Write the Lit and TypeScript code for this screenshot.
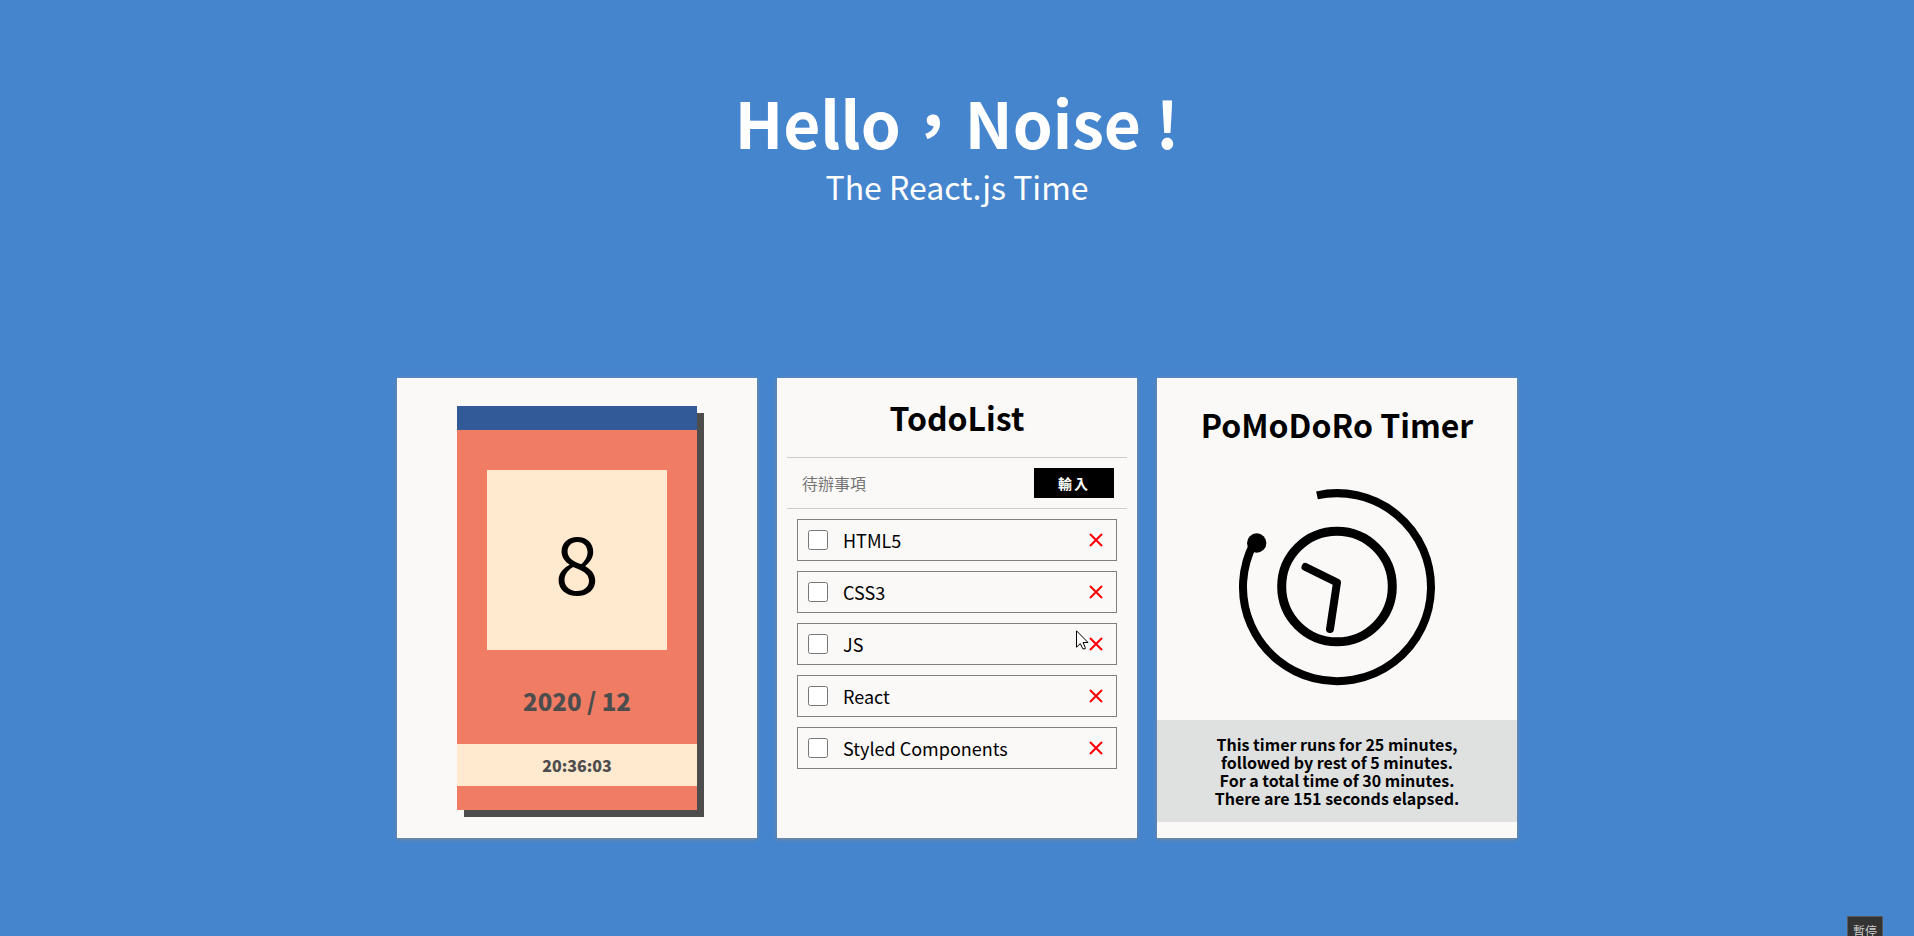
import { LitElement, html, css } from "lit";
import { customElement, property, state } from "lit/decorators.js";

@customElement("calendar-card")
class CalendarCard extends LitElement {
  @property({ type: Number }) year = 2020;
  @property({ type: Number }) month = 12;
  @property({ type: Number }) day = 8;
  @property() time = "20:36:03";

  static styles = css`
    :host {
      display: flex;
      flex-direction: column;
      align-items: center;
      justify-content: center;
    }
    .calendar {
      width: 240px;
      display: flex;
      flex-direction: column;
      align-items: center;
      border-top: 24px solid #325a98;
      padding: 40px 0 24px;
      box-sizing: border-box;
      background: #f07c64;
      box-shadow: 7px 7px 0 #4d4d4d;
      color: #4d4d4d;
      font-weight: 900;
    }
    .day {
      width: 180px;
      height: 180px;
      display: flex;
      align-items: center;
      justify-content: center;
      background: #ffeacf;
      color: #000;
      font-size: 80px;
      font-weight: 350;
    }
    .month {
      margin: 32px 0 24px;
      font-size: 24px;
      line-height: 38px;
    }
    .time {
      align-self: stretch;
      background: #ffeacf;
      text-align: center;
      font-size: 16px;
      line-height: 42px;
    }
  `;

  render() {
    return html`
      <div class="calendar">
        <div class="day">${this.day}</div>
        <div class="month">${this.year} / ${this.month}</div>
        <time class="time">${this.time}</time>
      </div>
    `;
  }
}

@customElement("todo-card")
class TodoCard extends LitElement {
  @state() private items = ["HTML5", "CSS3", "JS", "React", "Styled Components"];

  static styles = css`
    :host {
      display: block;
    }
    .title {
      margin: 0;
      padding: 16px 0;
      text-align: center;
      font-size: 32px;
      line-height: 47px;
      font-weight: 700;
    }
    .entry {
      display: flex;
      align-items: center;
      justify-content: space-between;
      margin: 0 10px;
      padding: 10px 13px 10px 15px;
      border: solid #ccc;
      border-width: 1px 0;
    }
    .field {
      flex: 1;
      min-width: 0;
      padding: 0;
      border: 0;
      outline: 0;
      background: none;
      font: inherit;
      font-size: 16px;
      line-height: 24px;
    }
    .field::placeholder {
      color: #757575;
    }
    .add {
      width: 80px;
      height: 30px;
      padding: 0;
      border: 0;
      background: #000;
      color: #fff;
      font: inherit;
      font-size: 14px;
      font-weight: 700;
      letter-spacing: 2px;
    }
    .list {
      display: flex;
      flex-direction: column;
      gap: 10px;
      margin: 10px 20px;
      padding: 0;
      list-style: none;
    }
    .item {
      display: flex;
      align-items: center;
      height: 40px;
      padding: 0 10px;
      border: 1px solid #808080;
    }
    .check {
      width: 20px;
      height: 20px;
      margin: 0 15px 0 0;
    }
    .label {
      flex: 1;
      font-size: 18px;
      line-height: 30px;
    }
    .remove {
      width: 20px;
      height: 20px;
      display: flex;
      align-items: center;
      justify-content: center;
      padding: 0;
      border: 0;
      background: none;
    }
  `;

  render() {
    return html`
      <h2 class="title">TodoList</h2>
      <form class="entry" @submit=${(e: Event) => e.preventDefault()}>
        <input class="field" type="text" aria-label="待辦事項" placeholder="待辦事項" />
        <button class="add">輸入</button>
      </form>
      <ul class="list">
        ${this.items.map(
          (item, i) => html`
            <li class="item">
              <input class="check" type="checkbox" id="item-${i}" />
              <label class="label" for="item-${i}">${item}</label>
              <button
                class="remove"
                aria-label="Remove ${item}"
                @click=${() => (this.items = this.items.filter((x) => x !== item))}
              >
                <svg width="14" height="14" viewBox="0 0 14 14" stroke="#f00" stroke-width="2">
                  <path d="M1 1 13 13M13 1 1 13" />
                </svg>
              </button>
            </li>
          `
        )}
      </ul>
    `;
  }
}

@customElement("timer-card")
class TimerCard extends LitElement {
  @property({ type: Number }) elapsed = 151;

  static styles = css`
    :host {
      display: flex;
      flex-direction: column;
      align-items: center;
      text-align: center;
    }
    .title {
      margin: 23px 0 17px;
      font-size: 32px;
      line-height: 47px;
      font-weight: 700;
    }
    .clock {
      display: block;
      margin-bottom: 11px;
    }
    .note {
      align-self: stretch;
      margin: 0;
      padding: 15px 0;
      background: #dfe1e0;
      font-size: 16px;
      line-height: 18px;
      font-weight: 700;
    }
  `;

  render() {
    return html`
      <h2 class="title">PoMoDoRo Timer</h2>
      <svg class="clock" width="244" height="244" viewBox="-122 -122 244 244" fill="none" stroke="#000">
        <path d="M-20 -91.7A94 94 0 1 1 -83 -44" stroke-width="8" />
        <circle cx="-80.3" cy="-44" r="9.7" fill="#000" stroke="none" />
        <circle cx="0" cy="-0.5" r="55.3" stroke-width="9" />
        <path d="M-31.5 -20 0 -4.5 -7 42" stroke-width="8" stroke-linecap="round" stroke-linejoin="round" />
      </svg>
      <p class="note">
        This timer runs for 25 minutes,<br />
        followed by rest of 5 minutes.<br />
        For a total time of 30 minutes.<br />
        There are ${this.elapsed} seconds elapsed.
      </p>
    `;
  }
}

@customElement("app-root")
class AppRoot extends LitElement {
  static styles = css`
    :host {
      display: block;
      position: relative;
      box-sizing: border-box;
      min-height: 100vh;
      overflow: hidden;
      padding: 75px 20px 96px;
      background: #4585ce;
      color: #000;
      font-family: "Noto Sans CJK TC", "Noto Sans", sans-serif;
    }
    .header {
      color: #fff;
      text-align: center;
    }
    .heading {
      margin: 0;
      font-size: 64px;
      line-height: 92px;
      font-weight: 700;
    }
    .subheading {
      margin: 0;
      font-size: 32px;
      line-height: 38px;
      font-weight: 400;
    }
    .cards {
      display: flex;
      flex-wrap: wrap;
      justify-content: center;
      gap: 20px;
      margin-top: 173px;
    }
    .card {
      width: 360px;
      min-height: 460px;
      background: #fbf9f8;
      box-shadow: 0 1px 4px #888;
    }
    .pointer {
      position: absolute;
      left: calc(50% + 119px);
      top: 630px;
    }
    .pause {
      position: absolute;
      right: 31px;
      bottom: -8px;
      width: 36px;
      height: 28px;
      padding: 0;
      border: 1px solid #5a5a5a;
      background: #333;
      color: #ccc;
      font: inherit;
      font-size: 12px;
    }
  `;

  render() {
    return html`
      <header class="header">
        <h1 class="heading">Hello，Noise !</h1>
        <p class="subheading">The React.js Time</p>
      </header>
      <main class="cards">
        <calendar-card class="card"></calendar-card>
        <todo-card class="card"></todo-card>
        <timer-card class="card"></timer-card>
      </main>
      <svg class="pointer" width="13" height="20" viewBox="0 0 13 20" fill="#fff" stroke="#000">
        <path d="M.5 .8V17.2L4.3 13.6 6.8 18.8H9.2V17.4L7 12.5H12Z" />
      </svg>
      <button class="pause">暫停</button>
    `;
  }
}
